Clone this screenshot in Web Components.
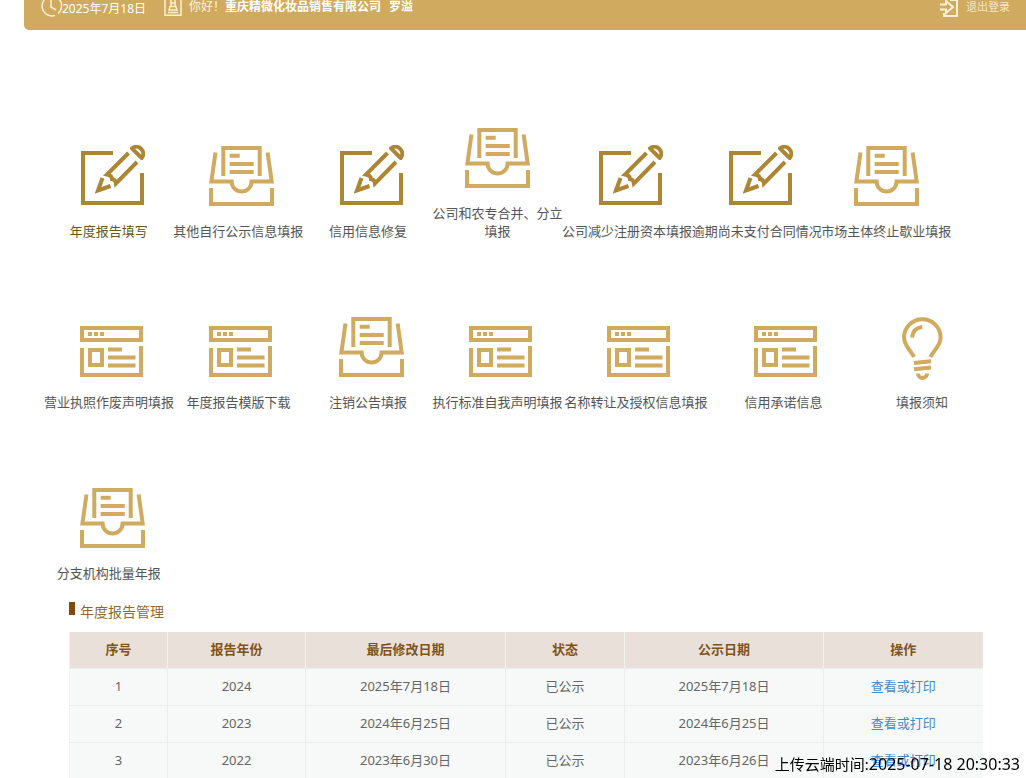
<!DOCTYPE html>
<html lang="zh-CN">
<head>
<meta charset="utf-8">
<title>年度报告管理</title>
<style>
html{height:100%}
body{margin:0;min-height:100%;background:#fff;color:#555;font:13px/18px "Noto Sans","Noto Sans CJK SC",sans-serif}
</style>
</head>
<body>
<report-page></report-page>
<script>
const define = (name, html) => {
  const template = document.createElement('template');
  template.innerHTML = html;
  customElements.define(name, class extends HTMLElement {
    constructor() {
      super();
      this.attachShadow({ mode: 'open' }).append(template.content.cloneNode(true));
    }
  });
};

const icons = {
  edit: `<g stroke="#ac8633"><path d="M33 8H3V58H62V28"/><path d="M48.500 8L27 29.500Q32 30.500 32 34Q35.500 34.500 36 38.500L57 17"/><path d="M22.500 33L18 45.500L30.500 41"/><path d="M52 3.300A6.900 6.900 0 0 1 61.700 13Z" stroke-width="4" stroke-linejoin="round"/></g>`,
  tray: `<path d="M14.300 31V3H50.700V31M20.700 10.700H30.700M20.700 19H44.700M20.700 27H44.700M6.500 7.500L2.400 36.500H22.600A10 10 0 0 0 42.600 36.500H62.700L58.600 7.500M2 43V59H63V43"/>`,
  browser: `<path d="M2 12H61V24H2ZM8 18H12M14 18H18M20 18H24M2 32V59H61V30M10 34H22V49H10ZM28 33.500H42M28 41.500H55.500M28 49.500H55.500"/>`,
  bulb: `<path d="M21 41C18.500 35 11 30 11 21.500A18.300 18.300 0 0 1 47.600 21.500C47.600 30 40 35 37.500 41M19 21.500Q20 12 29.300 11M21 47L38 45.300M21 53.200L38 51.500M25 57.500A4.500 4.500 0 0 0 34 57.500" stroke-width="4"/>`
};

customElements.define('menu-tile', class extends HTMLElement {
  constructor() {
    super();
    this.attachShadow({ mode: 'open' }).innerHTML = `
    <style>
      :host{display:flex;justify-content:center;min-width:0}
      a{display:flex;flex-direction:column;align-items:center;gap:13px;padding-bottom:1px;color:inherit;text-decoration:none;text-align:center;white-space:nowrap}
      svg{display:block;width:65px;height:64px;padding-left:7px;fill:none;stroke:#cfaa5f;stroke-width:4}
      :host([centered]) svg{padding-left:0}
      :host([active]){color:#6a5610}
    </style>
    <a href="#"><svg viewBox="0 0 65 64" aria-hidden="true"></svg><span><slot></slot></span></a>`;
  }
  static get observedAttributes() { return ['icon']; }
  attributeChangedCallback(name, old, value) {
    this.shadowRoot.querySelector('svg').innerHTML = icons[value];
  }
});

define('top-bar', `
<style>
  :host{display:flex;align-items:flex-start;height:30px;margin-left:24px;padding:0 16px 0 17px;background:#d0aa5f;border-radius:0 0 0 5px;color:#fff;line-height:14px;white-space:nowrap;box-sizing:border-box}
  svg{display:block;flex:none;fill:none;stroke:#fbf0d5;stroke-width:1.500}
  time{font-size:12px;line-height:17px;margin-right:18px}
  .hello{width:36px;margin-left:7px;color:#fff6e0;font-size:12px}
  b{margin-right:8px;font-size:12px}
  a{display:flex;gap:8px;margin-left:auto;font-size:11px;color:#f6e6c3;text-decoration:none}
  a svg{stroke-width:2}
</style>
<svg width="21" height="17" viewBox="0 0 21 17"><path d="M5 -2A10 10 0 0 0 14 15.500M17 13.500A10 10 0 0 0 18 -1M10 -1V7L15 10"/></svg>
<time>2025年7月18日</time>
<svg width="18" height="17" viewBox="0 0 18 17"><path d="M1 0V15.300H17V0M4 12.500H14M5 10L6 6.500H12L13 10ZM7 6V0M11 6V0M7 3H11"/></svg>
<span class="hello">你好！</span>
<b>重庆精微化妆品销售有限公司</b><b>罗溢</b>
<a href="#"><svg width="18" height="17" viewBox="0 0 18 17"><path d="M0 4.500H6V1L13 7L6 13V9.500H0M4 13V16H17V0H10"/></svg>退出登录</a>`);

define('tile-menu', `
<style>
  :host{display:grid;gap:75px;padding:97px 39px 0 44px}
  nav{display:grid;align-items:end}
  .first,.third{grid-template-columns:repeat(7,minmax(0,1fr));margin-right:36px}
  .second{grid-template-columns:130fr 129fr 130fr 129fr 148fr 147fr 130fr}
</style>
<nav class="first">
  <menu-tile icon="edit" active>年度报告填写</menu-tile>
  <menu-tile icon="tray">其他自行公示信息填报</menu-tile>
  <menu-tile icon="edit">信用信息修复</menu-tile>
  <menu-tile icon="tray" centered>公司和农专合并、分立<br>填报</menu-tile>
  <menu-tile icon="edit">公司减少注册资本填报</menu-tile>
  <menu-tile icon="edit">逾期尚未支付合同情况</menu-tile>
  <menu-tile icon="tray" centered>市场主体终止歇业填报</menu-tile>
</nav>
<nav class="second">
  <menu-tile icon="browser">营业执照作废声明填报</menu-tile>
  <menu-tile icon="browser">年度报告模版下载</menu-tile>
  <menu-tile icon="tray">注销公告填报</menu-tile>
  <menu-tile icon="browser">执行标准自我声明填报</menu-tile>
  <menu-tile icon="browser">名称转让及授权信息填报</menu-tile>
  <menu-tile icon="browser">信用承诺信息</menu-tile>
  <menu-tile icon="bulb">填报须知</menu-tile>
</nav>
<nav class="third">
  <menu-tile icon="tray">分支机构批量年报</menu-tile>
</nav>`);

define('report-table', `
<style>
  :host{display:block;padding:19px 44px 0 69px}
  h2{display:flex;gap:5px;margin:0 0 11px;font-size:14px;line-height:19px;font-weight:400;color:#8f6b33}
  h2::before{content:"";width:6px;height:13px;background:#804c0c}
  table{width:100%;table-layout:fixed;border-collapse:collapse;background:#f7f9f8;text-align:center;color:#666}
  th,td{height:34px;padding:0 0 2px;border:1px solid #ebecec;border-right:0}
  tr>:first-child{border-left-color:#f1f1f0}
  th{background:#e9e1d9;color:#80531b;font-weight:700;border-top:0;border-left-color:#f5f1ed}
  a{color:#428bca;text-decoration:none}
</style>
<h2>年度报告管理</h2>
<table>
  <colgroup><col style="width:98px"><col style="width:138px"><col style="width:200px"><col style="width:119px"><col style="width:199px"><col style="width:159px"></colgroup>
  <thead><tr><th>序号</th><th>报告年份</th><th>最后修改日期</th><th>状态</th><th>公示日期</th><th>操作</th></tr></thead>
  <tbody>
    <tr><td>1</td><td>2024</td><td>2025年7月18日</td><td>已公示</td><td>2025年7月18日</td><td><a href="#">查看或打印</a></td></tr>
    <tr><td>2</td><td>2023</td><td>2024年6月25日</td><td>已公示</td><td>2024年6月25日</td><td><a href="#">查看或打印</a></td></tr>
    <tr><td>3</td><td>2022</td><td>2023年6月30日</td><td>已公示</td><td>2023年6月26日</td><td><a href="#">查看或打印</a></td></tr>
  </tbody>
</table>`);

define('upload-stamp', `
<style>
  :host{position:fixed;right:6px;bottom:3px;color:#000;font-size:15px;line-height:22px;white-space:nowrap}
  time{font-size:16px}
</style>上传云端时间:<time>2025-07-18 20:30:33</time>`);

define('report-page', `
<style>:host{display:block}</style>
<top-bar></top-bar>
<main><tile-menu></tile-menu><report-table></report-table></main>
<upload-stamp></upload-stamp>`);
</script>
</body>
</html>
